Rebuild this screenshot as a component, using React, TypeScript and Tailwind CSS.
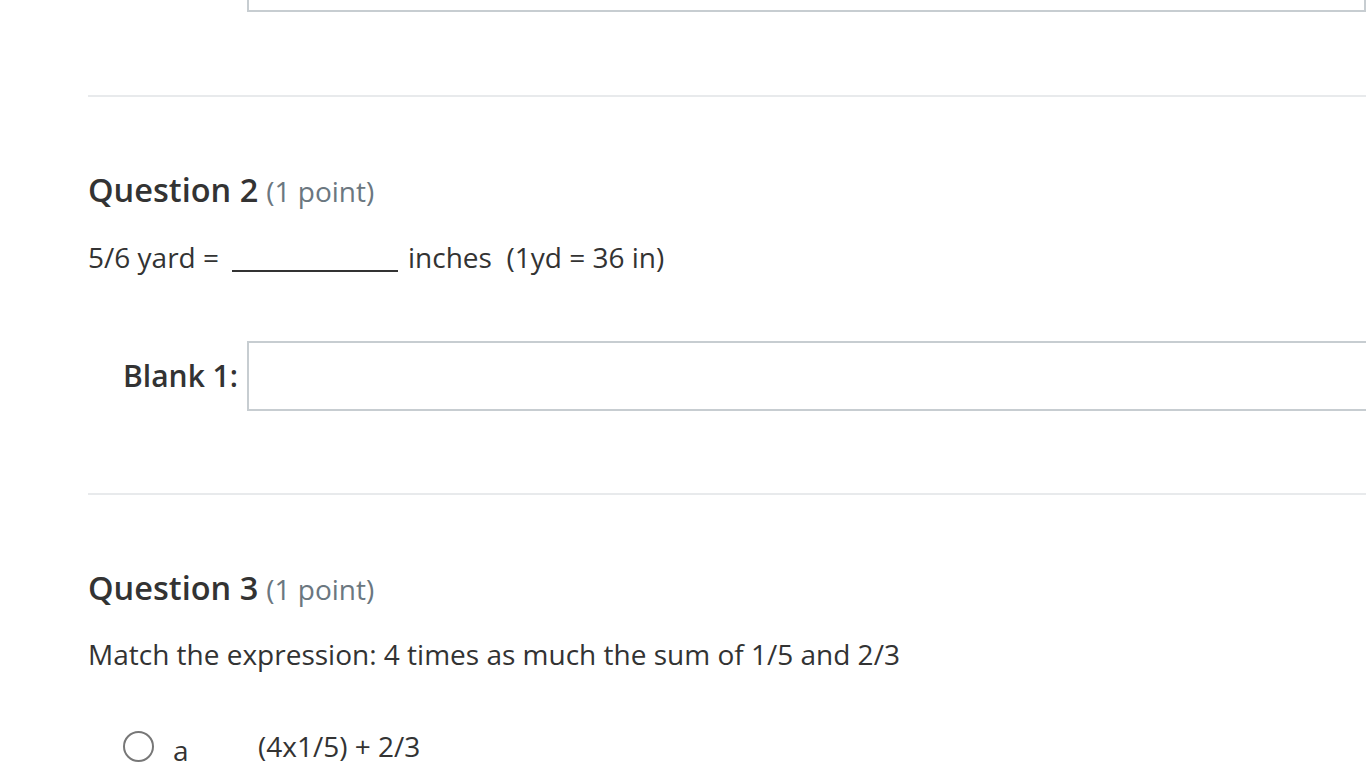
const font = { fontFamily: '"Open Sans", "Liberation Sans", sans-serif' };

const Divider = () => <div className="ml-[88px] h-[2px] bg-[#e8eaec]" />;

const QuestionHeader = ({ n }: { n: number }) => (
  <h2 className="flex items-baseline gap-[8px] text-[#333333]">
    <span className="text-[32.5px] font-semibold leading-none">Question {n}</span>
    <span className="text-[28px] leading-none text-[#6b7780]">(1 point)</span>
  </h2>
);

export default function App() {
  return (
    <div className="min-h-screen overflow-hidden bg-white text-[#333333]" style={font}>
      <div className="ml-[247px] h-[12px] border-x-2 border-b-2 border-[#c7cdd1]" />
      <div className="h-[83px]" />
      <Divider />

      <section className="pl-[88px] pt-[77px]">
        <QuestionHeader n={2} />
        <p className="mt-[36px] flex items-end text-[28px] leading-none">
          <span>5/6 yard =</span>
          <span className="ml-[13px] mr-[10px] inline-block h-[2px] w-[166px] translate-y-[1px] bg-[#333333]" />
          <span className="whitespace-pre">inches  (1yd = 36 in)</span>
        </p>
        <div className="mt-[70px] flex items-center">
          <label className="w-[159px] pr-[9px] text-right text-[30px] font-semibold">Blank 1:</label>
          <div className="h-[70px] flex-1 border-2 border-r-0 border-[#c7cdd1]" />
        </div>
      </section>

      <div className="h-[82px]" />
      <Divider />

      <section className="pl-[88px] pt-[77px]">
        <QuestionHeader n={3} />
        <p className="mt-[36px] text-[28px] leading-none">
          Match the expression: 4 times as much the sum of 1/5 and 2/3
        </p>
        <div className="mt-[57px] flex items-center pl-[35px]">
          <span className="h-[31px] w-[31px] rounded-full border-[2.5px] border-[#777777]" />
          <span className="ml-[19px] w-[85px] translate-y-[4px] text-[28px]">a</span>
          <span className="text-[28px]">(4x1/5) + 2/3</span>
        </div>
      </section>
    </div>
  );
}
